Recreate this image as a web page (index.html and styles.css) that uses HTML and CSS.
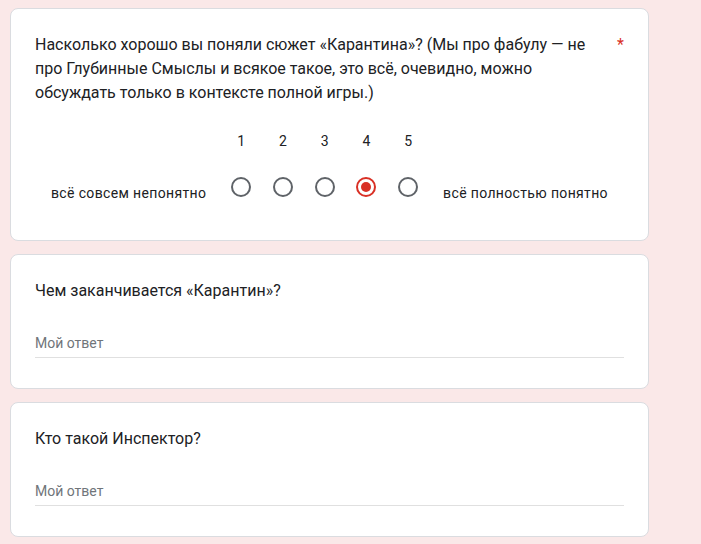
FILE: index.html
```html
<!DOCTYPE html>
<html lang="ru">
<head>
<meta charset="utf-8">
<link rel="stylesheet" href="styles.css">
</head>
<body>
<div class="page">
  <div class="card">
    <div class="title-row">
      <div class="title">Насколько хорошо вы поняли сюжет «Карантина»? (Мы про фабулу — не про Глубинные Смыслы и всякое такое, это всё, очевидно, можно обсуждать только в контексте полной игры.)</div>
      <span class="req">*</span>
    </div>
    <div class="scale">
      <div class="scale-label">всё совсем непонятно</div>
      <div class="scale-opt"><div class="num">1</div><div class="radio-wrap"><span class="radio"></span></div></div>
      <div class="scale-opt"><div class="num">2</div><div class="radio-wrap"><span class="radio"></span></div></div>
      <div class="scale-opt"><div class="num">3</div><div class="radio-wrap"><span class="radio"></span></div></div>
      <div class="scale-opt"><div class="num">4</div><div class="radio-wrap"><span class="radio checked"></span></div></div>
      <div class="scale-opt"><div class="num">5</div><div class="radio-wrap"><span class="radio"></span></div></div>
      <div class="scale-label">всё полностью понятно</div>
    </div>
  </div>
  <div class="card short">
    <div class="title">Чем заканчивается «Карантин»?</div>
    <div class="answer">Мой ответ</div>
  </div>
  <div class="card short">
    <div class="title">Кто такой Инспектор?</div>
    <div class="answer">Мой ответ</div>
  </div>
</div>
</body>
</html>
```

FILE: styles.css
```css
html, body {
  margin: 0;
  padding: 0;
  background: #fae8e8;
  font-family: Roboto, "Liberation Sans", Arial, sans-serif;
  color: #202124;
}
.page {
  display: flex;
  flex-direction: column;
  gap: 13px;
  padding: 8px 0 0 10px;
  width: 639px;
}
.card {
  background: #fff;
  border: 1px solid #dadce0;
  border-radius: 8px;
  padding: 24px 24px 29px;
}
.card.short {
  padding-bottom: 30px;
}
.title-row {
  display: flex;
  align-items: flex-start;
}
.title {
  flex: 1;
  font-size: 16px;
  line-height: 24px;
}
.req {
  color: #d93025;
  font-size: 16px;
  line-height: 24px;
  padding-left: 24px;
}
.scale {
  display: flex;
  align-items: flex-end;
  margin-top: 24px;
}
.scale-label {
  flex: none;
  white-space: nowrap;
  font-size: 14px;
  line-height: 20px;
  padding: 0 14px 8px 16px;
  letter-spacing: 0.35px;
}
.scale-label + .scale-opt ~ .scale-label {
  padding: 0 16px 8px 14px;
}
.scale-opt {
  flex: 1 1 0;
  min-width: 0;
  display: flex;
  flex-direction: column;
  align-items: center;
}
.num {
  font-size: 14px;
  line-height: 24px;
}
.radio-wrap {
  margin-top: 10px;
  width: 48px;
  height: 48px;
  display: flex;
  align-items: center;
  justify-content: center;
}
.radio {
  box-sizing: border-box;
  width: 20px;
  height: 20px;
  border: 2px solid #5f6368;
  border-radius: 50%;
  display: flex;
  align-items: center;
  justify-content: center;
}
.radio.checked {
  border-color: #d93025;
}
.radio.checked::after {
  content: "";
  width: 10px;
  height: 10px;
  border-radius: 50%;
  background: #d93025;
}
.answer {
  margin-top: 30px;
  font-size: 14px;
  line-height: 20px;
  color: #70757a;
  padding-bottom: 4px;
  border-bottom: 1px solid #e0e0e0;
}
```
